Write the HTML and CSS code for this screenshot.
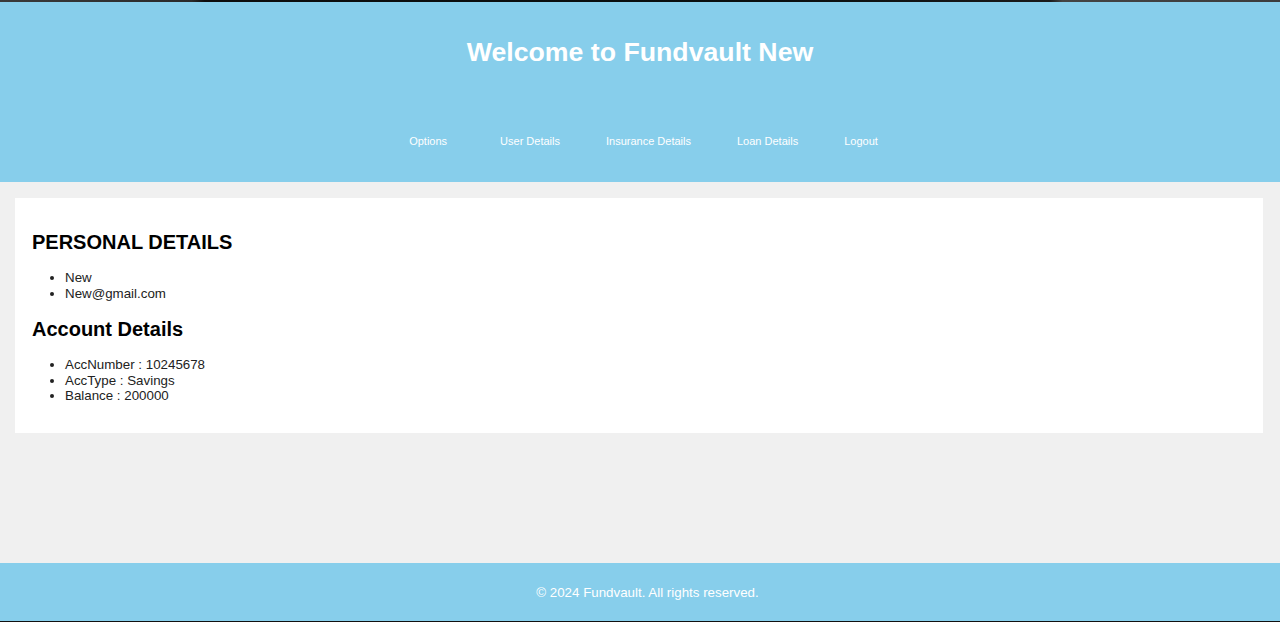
FILE: index.html
```html
<!DOCTYPE html>
<html lang="en">
<head>
<meta charset="utf-8">
<title>Fundvault</title>
<link rel="stylesheet" href="styles.css">
</head>
<body>
<div class="topstrip"></div>
<header class="site-header">
  <h1 class="title">Welcome to Fundvault New</h1>
  <nav class="nav">
    <a class="nav-link nav-options" href="#">Options</a>
    <a class="nav-link" href="#">User Details</a>
    <a class="nav-link" href="#">Insurance Details</a>
    <a class="nav-link" href="#">Loan Details</a>
    <a class="nav-link" href="#">Logout</a>
  </nav>
</header>
<main class="main">
  <section class="card">
    <h2 class="heading">PERSONAL DETAILS</h2>
    <ul class="list">
      <li>New</li>
      <li>New@gmail.com</li>
    </ul>
    <h2 class="heading">Account Details</h2>
    <ul class="list">
      <li>AccNumber : 10245678</li>
      <li>AccType : Savings</li>
      <li>Balance : 200000</li>
    </ul>
  </section>
</main>
<footer class="site-footer">
  <p class="footer-text">&copy; 2024 Fundvault. All rights reserved.</p>
</footer>
<div class="bottomline"></div>
</body>
</html>
```

FILE: styles.css
```css
html, body {
  margin: 0;
  padding: 0;
}
body {
  font-family: "Liberation Sans", Arial, sans-serif;
  background: #f0f0f0;
  min-height: 100vh;
  display: flex;
  flex-direction: column;
}
.topstrip {
  height: 2px;
  background: linear-gradient(to right, #3a3a3a 0%, #2a2a2a 15%, #0d0d0d 16%, #0a0f0f 60%, #1a1a1a 82%, #444 83%, #3c3c3c 100%);
}
.bottomline {
  height: 1px;
  background: #111;
}
.site-header {
  background: #87ceeb;
  color: #fff;
  height: 180px;
  box-sizing: border-box;
  padding-top: 35px;
  text-align: center;
}
.title {
  margin: 0;
  font-size: 26.7px;
  line-height: 30px;
  font-weight: bold;
}
.nav {
  margin-top: 68px;
  display: flex;
  justify-content: center;
  gap: 46px;
  padding-left: 7px;
}
.nav-link {
  color: #fff;
  text-decoration: none;
  font-size: 11px;
  line-height: 13px;
}
.nav-options {
  margin-right: 7px;
}
.main {
  flex: 1;
  padding: 16px 17px 0 15px;
}
.card {
  background: #fff;
  padding: 16px 16px 16px 17px;
}
.heading {
  font-size: 20px;
  line-height: 23px;
  margin: 16.6px 0;
  color: #000;
}
.list {
  margin: 13.33px 0;
  padding-left: 33px;
  font-size: 13.33px;
  line-height: 15.5px;
  color: #222;
}
.site-footer {
  background: #87ceeb;
  height: 58px;
  display: flex;
  align-items: center;
  justify-content: center;
}
.footer-text {
  margin: 0;
  color: #fff;
  font-size: 13.33px;
  padding-left: 15px;
}
```
